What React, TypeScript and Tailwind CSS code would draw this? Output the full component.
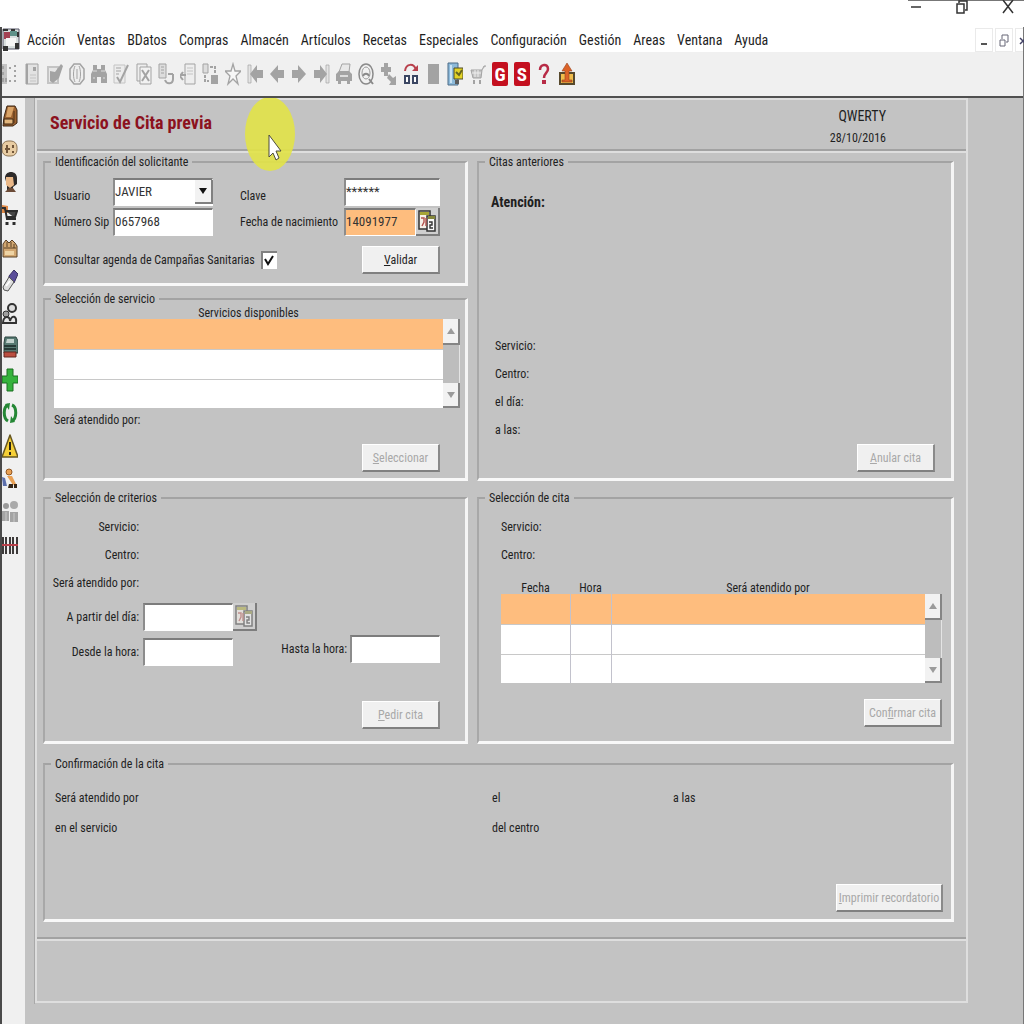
import React, { ReactNode } from "react";

const MENU = [
  "Acción", "Ventas", "BDatos", "Compras", "Almacén", "Artículos", "Recetas",
  "Especiales", "Configuración", "Gestión", "Areas", "Ventana", "Ayuda",
];

const G = "#a3a3a3";
const L = "#c4c4c4";

const TOOLS: { name: string; art: ReactNode }[] = [
  { name: "Lista", art: <><path d="M0 2h5v20H0z" fill={L} /><path d="M1 4v3M1 10v3M1 16v4M4 16v4" stroke={G} strokeWidth="2" /><path d="M8 5v2M8 18v2M13 3v2M13 8v2M13 13v2M13 18v2" stroke={G} strokeWidth="2" /></> },
  { name: "Ficha", art: <><path d="M2 2h12v20H2z" fill="#e2e2e2" stroke={G} /><path d="M3 2v20" stroke={G} strokeWidth="2" /><path d="M6 13h6M6 16h6M6 19h6" stroke={L} /><path d="M9 5h3v4H9z" fill={G} /></> },
  { name: "Modificar", art: <><path d="M1 5h10v16H1z" fill="#e6e6e6" stroke={L} strokeWidth="2" /><path d="M3 9l5 1 6-8 2 2-4 12-6 5-3-2z" fill={G} /></> },
  { name: "Anular", art: <><path d="M5 2h6l4 5v10l-4 5H5l-4-5V7z" fill="#eee" stroke={G} strokeWidth="1.5" /><path d="M6 4c-2 4-2 12 0 16M10 4c2 4 2 12 0 16M8 7v10" fill="none" stroke={G} /></> },
  { name: "Buscar", art: <><path d="M2 3h4v4h4V3h4v5l2 4v9h-6v-6H6v6H0v-9l2-4z" fill={G} /><path d="M2 9h4M10 9h4M2 16h2M12 16h2" stroke="#ddd" /></> },
  { name: "Validar datos", art: <><path d="M1 3h11v18H1z" fill="#ececec" stroke={L} /><path d="M3 6h5M3 9h5M3 12h3" stroke={G} /><path d="M4 15l3 5L15 3" fill="none" stroke={G} strokeWidth="2" /></> },
  { name: "Borrar", art: <><path d="M1 2h10v17H1z" fill="#eee" stroke={G} /><path d="M4 5h11v17H4z" fill="#f2f2f2" stroke={G} /><path d="M6 8l7 11M13 8L6 19" stroke={G} strokeWidth="2" /></> },
  { name: "Duplicar", art: <><path d="M1 2h7v14H1z" fill="#ddd" stroke={G} /><path d="M3 5h3M3 8h3M3 11h3" stroke={G} /><path d="M7 18c2 5 8 4 8-1v-5M10 12h5" fill="none" stroke={G} strokeWidth="2" /></> },
  { name: "Copiar página", art: <><path d="M5 2h10v20H5z" fill="#eee" stroke={G} /><path d="M7 6h6M7 9h6M7 12h6" stroke={L} /><path d="M6 13H0M3 10l-3 4 3 4" fill="none" stroke={G} strokeWidth="2" /></> },
  { name: "Mover", art: <><path d="M1 2h5v9H1z" fill="#ddd" stroke={G} /><path d="M9 13h7v9H9z" fill={G} /><path d="M8 5h5v6M3 13v6h4" fill="none" stroke={G} strokeWidth="2" strokeDasharray="3 1" /></> },
  { name: "Favoritos", art: <path d="M8 2l2 7h6l-5 5 2 8-5-5-5 5 2-8-5-5h6z" fill="#f6f6f6" stroke={G} strokeWidth="1.3" /> },
  { name: "Primero", art: <><path d="M1 3h3v18H1z" fill="#e4e4e4" stroke={G} strokeWidth=".7" /><path d="M3 12l7-9v5h6v8h-6v5z" fill={G} /></> },
  { name: "Anterior", art: <path d="M1 12l8-9v5h6v8H9v5z" fill={G} /> },
  { name: "Siguiente", art: <path d="M15 12L7 3v5H1v8h6v5z" fill={G} /> },
  { name: "Último", art: <><path d="M12 3h3v18h-3z" fill="#e4e4e4" stroke={G} strokeWidth=".7" /><path d="M13 12L6 3v5H0v8h6v5z" fill={G} /></> },
  { name: "Imprimir", art: <><path d="M3 10L6 2h8l-1 8z" fill="#e8e8e8" stroke={G} /><path d="M0 12l3-3h10l3 3v7h-2v3h-3v-3H5v3H2v-3H0z" fill={G} /><path d="M4 14h8" stroke="#ddd" strokeWidth="2" /></> },
  { name: "Consultar", art: <><ellipse cx="8" cy="12" rx="7" ry="10" fill="#f1f1f1" stroke="#8a8a8a" strokeWidth="1.5" /><ellipse cx="8" cy="11" rx="4" ry="6" fill="none" stroke="#999" /><path d="M5 14c1-3 5-3 6 0M11 17l4 5" fill="none" stroke="#8a8a8a" strokeWidth="2" /></> },
  { name: "Añadir", art: <><path d="M3 1h4v4h3v5H7v4H3v-4H0V5h3z" fill={G} /><path d="M8 12l4 4 3-2v9H8l2-3-4-4z" fill={G} /></> },
  { name: "Rehacer", art: <><path d="M2 9c1-8 9-8 11-1" fill="none" stroke="#b8404c" strokeWidth="2" /><path d="M9 9h6V3z" fill="#b8404c" /><path d="M2 14h4v7H2zM10 14h4v7h-4z" fill="#fff" stroke="#3b4763" strokeWidth="2" /></> },
  { name: "Detener", art: <path d="M3 2h11v20H3z" fill={G} /> },
  { name: "Agenda", art: <><path d="M1 1h10v22H1z" fill="#8cb9d9" stroke="#4c6c88" /><path d="M3 3h2v18H3z" fill="#c9e2f2" /><path d="M7 6h9v11H7z" fill="#e3d325" stroke="#4d4a2b" /><path d="M9 10l3 3 3-5" fill="none" stroke="#67651d" strokeWidth="2" /><path d="M8 18h4v4H8z" fill="#5b5b5b" /></> },
  { name: "Carrito", art: <><path d="M1 8h11l-1 8H3zM12 8l2-4h2" fill={L} stroke={G} /><path d="M2 11h9M5 8v7M8 8v7" stroke="#eee" /><path d="M4 18v4M10 18v4" stroke={G} strokeWidth="2" /></> },
  { name: "Gestión G", art: <><rect x="0" y="0" width="16" height="24" rx="2" fill="#c4101f" /><text x="8" y="19" textAnchor="middle" fill="#fff" fontSize="19" fontWeight="bold" fontFamily="Roboto Condensed, Liberation Sans, sans-serif">G</text></> },
  { name: "Servicio S", art: <><rect x="0" y="0" width="16" height="24" rx="2" fill="#c4101f" /><text x="8" y="19" textAnchor="middle" fill="#fff" fontSize="19" fontWeight="bold" fontFamily="Roboto Condensed, Liberation Sans, sans-serif">S</text></> },
  { name: "Ayuda", art: <><path d="M4 8c0-6 8-7 8-1 0 4-4 4-4 9" fill="none" stroke="#b72b46" strokeWidth="2.5" /><path d="M6 18h4v4H6z" fill="#b72b46" /></> },
  { name: "Salir", art: <><path d="M1 11h14v11H1z" fill="#f0bd4c" stroke="#57492d" strokeWidth="2" /><path d="M8 1l5 8h-3v9h3v2H3v-2h3V9H3z" fill="#dc6328" stroke="#95401c" strokeWidth=".6" /></> },
];

const SIDE: { name: string; art: ReactNode }[] = [
  { name: "Caja registradora", art: <><path d="M2 13L5 2h8l2 4v13l-4 3H1z" fill="#9c6231" stroke="#3d2715" /><path d="M6 3h6L9 13H4z" fill="#d9a468" /><path d="M2 15h9v5H2z" fill="#e3b77e" stroke="#3d2715" /><path d="M12 7v12" stroke="#4f3219" /></> },
  { name: "Tarjeta", art: <><rect x="0" y="4" width="15" height="15" rx="6" fill="#e8cca2" stroke="#8d7555" /><path d="M5 8v8M3 12h5M11 8v3M11 14v2" fill="none" stroke="#71563a" strokeWidth="2" /></> },
  { name: "Paciente", art: <><path d="M3 8c0-8 12-8 12 0v6l-4 3v4H5v-6z" fill="#2d2a2a" /><path d="M4 7h7l1 8-4 3-4-3z" fill="#eab888" /><path d="M3 22l4-4h4l3 4z" fill="#6b4a36" /></> },
  { name: "Ventas", art: <><path d="M0 2l6 1v7H0z" fill="#e08a48" /><path d="M0 5h3l2 11h9M4 8h11l-2 6H5" fill="#454545" stroke="#2c2c2c" strokeWidth="2" /><path d="M5 19v3M12 19v3" stroke="#2c2c2c" strokeWidth="3" /></> },
  { name: "Almacén", art: <><path d="M1 8l3-4 3 3 3-3 3 3 2 3v11H1z" fill="#d2a771" stroke="#594026" /><path d="M2 12h12M5 6v5M9 6v5M12 8v4" stroke="#594026" /><path d="M3 15h9v4H3z" fill="#eed4a5" /></> },
  { name: "Medicamentos", art: <><path d="M7 7l5-6 4 4-4 9-5-3z" fill="#5a4d99" stroke="#38305f" /><path d="M1 18l6-10 5 5-6 9-4-1z" fill="#dedede" stroke="#565656" /><path d="M4 17l4-5" stroke="#fff" strokeWidth="2" /></> },
  { name: "Personal", art: <><circle cx="10" cy="6" r="4" fill="#dedede" stroke="#333" strokeWidth="2" /><circle cx="4" cy="12" r="3" fill="#a0a0a0" stroke="#333" /><path d="M1 21c0-7 7-8 7-2 2-7 7-5 6 2z" fill="#e8e8e8" stroke="#333" strokeWidth="2" /></> },
  { name: "Impresora", art: <><path d="M3 2h11l2 4v12H2V8z" fill="#577a72" stroke="#2d4540" /><path d="M5 4h7v4H4z" fill="#c2d2cd" /><path d="M2 11h12M2 14h12" stroke="#273b37" strokeWidth="2" /><path d="M2 17h12v5H2z" fill="#bb4e40" stroke="#60261f" /></> },
  { name: "Añadir", art: <path d="M5 1h6v7h5v7h-5v8H5v-8H0V8h5z" fill="#35b23c" stroke="#1b6e21" /> },
  { name: "Actualizar", art: <><path d="M6 4c-5 2-5 13 0 16M10 4c5 2 5 13 0 16" fill="none" stroke="#258735" strokeWidth="3" /><path d="M3 3l5-1-1 7zM13 21l-5 1 1-7z" fill="#258735" /></> },
  { name: "Aviso", art: <><path d="M8 1l8 22H0z" fill="#f6cf36" stroke="#665721" strokeWidth="1.5" strokeLinejoin="round" /><path d="M8 8v8M8 18v3" stroke="#2a2516" strokeWidth="2" /></> },
  { name: "Consulta", art: <><circle cx="7" cy="5" r="3" fill="#e9a054" stroke="#915722" /><path d="M5 9h5l4 8-3 1-4-6z" fill="#e9a054" /><path d="M0 10l3 1 2 8H1z" fill="#5c6fac" /><path d="M7 17h4v4H6zM12 17h3v4h-3z" fill="#352515" /></> },
  { name: "Grupos", art: <><circle cx="4" cy="6" r="3" fill="#999" /><circle cx="12" cy="5" r="4" fill="#aaa" /><path d="M0 11h7v10H0zM8 12h8v10H8z" fill="#a4a4a4" /><path d="M4 12v9M12 13v9" stroke="#c8c8c8" /></> },
  { name: "Código de barras", art: <><path d="M1 4v17M4 4v17M8 4v17M11 4v17M15 4v17" stroke="#3d3a3a" strokeWidth="2" /><path d="M0 12h16" stroke="#b8404a" strokeWidth="2" /></> },
];

function IconButton({ name, children }: { name: string; children: ReactNode }) {
  return (
    <button type="button" aria-label={name} className="block h-6 w-4 shrink-0">
      <svg viewBox="0 0 16 24" className="block h-6 w-4" aria-hidden="true">{children}</svg>
    </button>
  );
}

function Group({ title, className, children }: { title: string; className?: string; children: ReactNode }) {
  return (
    <fieldset className={`flex min-w-0 flex-col border-t-2 border-r-3 border-b-3 border-l-2 border-t-[#a3a3a3] border-r-[#f5f5f5] border-b-[#f8f8f8] border-l-[#a8a8a8] ${className ?? ""}`}>
      <legend className="ml-1.5 px-1 leading-4">{title}</legend>
      {children}
    </fieldset>
  );
}

function PushButton({ children, disabled, className }: { children: ReactNode; disabled?: boolean; className?: string }) {
  return (
    <button
      type="button"
      disabled={disabled}
      className={`h-7 shrink-0 border-t border-r-2 border-b-2 border-l border-t-white border-r-[#8a8a8a] border-b-[#808080] border-l-white bg-[#f0f0f0] text-center whitespace-nowrap disabled:text-[#a8a8a8] ${className ?? "w-[78px]"}`}
    >
      {children}
    </button>
  );
}

const FIELD = "h-7 min-w-0 border-t-2 border-l-2 border-r border-b border-t-[#7c7c7c] border-l-[#8c8c8c] border-r-white border-b-white bg-white pb-0.5 text-[13px] leading-5 text-[#333] outline-none";

function Calendar({ faded }: { faded?: boolean }) {
  return (
    <button type="button" aria-label="Abrir calendario" className="flex h-7 w-6 shrink-0 items-center justify-center border-r-2 border-b-2 border-[#7d7d7d] bg-[#cfcfcf]">
      <svg viewBox="0 0 18 24" className={faded ? "h-6 w-[18px] opacity-50" : "h-6 w-[18px]"} aria-hidden="true">
        <path d="M1 2h11v18H1z" fill="#f6f0e8" stroke="#333" strokeWidth="1.5" />
        <path d="M2 3h9v3H2z" fill="#a6a436" />
        <path d="M9 7h8v15H9z" fill="#f8f8f8" stroke="#333" strokeWidth="1.5" />
        <path d="M10 7h7v3h-7z" fill="#85873b" />
        <path d="M3 9h3v4l-2 4M8 9v8" fill="none" stroke="#b2524e" strokeWidth="1.4" />
        <path d="M11 13h3v3h-2v3h3" fill="none" stroke="#333" strokeWidth="1.4" />
      </svg>
    </button>
  );
}

function Scroller() {
  return (
    <div className="flex w-[17px] shrink-0 flex-col self-end bg-[#bdbdbd]">
      <button type="button" aria-label="Subir" className="flex h-[26px] items-center justify-center border-r-2 border-b-2 border-[#858585] bg-[#f2f2f2]">
        <svg viewBox="0 0 8 6" className="h-1.5 w-2" aria-hidden="true"><path d="M4 0l4 6H0z" fill="#9b9b9b" /></svg>
      </button>
      <div className="h-[38px] border-r border-[#e4e4e4]" />
      <button type="button" aria-label="Bajar" className="flex h-[25px] items-center justify-center border-r-2 border-b-2 border-[#858585] bg-[#f2f2f2]">
        <svg viewBox="0 0 8 6" className="h-1.5 w-2" aria-hidden="true"><path d="M4 6L0 0h8z" fill="#9b9b9b" /></svg>
      </button>
    </div>
  );
}

function DataTable({ columns }: { columns: { title: string; width: string }[] }) {
  return (
    <div className="flex">
      <table className="flex-1 table-fixed border-collapse">
        <thead>
          <tr className="h-3">
            {columns.map((c) => (
              <th key={c.title} scope="col" className={`p-0 leading-3 font-normal ${c.width}`}>{c.title}</th>
            ))}
          </tr>
        </thead>
        <tbody>
          {["bg-[#febd7e]", "bg-white", "bg-white"].map((bg, i) => (
            <tr key={i} className={`${bg} ${i < 2 ? "h-[30px] border-b border-[#c8c8c8]" : "h-[29px]"}`}>
              {columns.map((c, j) => (
                <td key={c.title} className={j > 0 ? "border-l border-[#c2c2cc]" : ""} />
              ))}
            </tr>
          ))}
        </tbody>
      </table>
      <Scroller />
    </div>
  );
}

function Divider() {
  return <div className="h-1 border-t-2 border-b-2 border-t-[#a2a2a2] border-b-[#dedede]" />;
}

export default function App() {
  return (
    <div className="flex min-h-screen flex-col overflow-hidden bg-[#c3c3c3] font-['Roboto_Condensed','Liberation_Sans_Narrow','Liberation_Sans',sans-serif] text-[12px] leading-4 text-[#1f1f1f]">
      <div className="flex h-[27px] justify-end bg-white">
        <div className="flex h-3 w-[116px] items-center justify-between border-t border-[#777] pr-2.5 pl-0.5">
          <button type="button" aria-label="Minimizar" className="h-3 w-3">
            <svg viewBox="0 0 12 12" className="h-3 w-3"><path d="M1 6h10" stroke="#333" strokeWidth="1.5" /></svg>
          </button>
          <button type="button" aria-label="Restaurar" className="h-3.5 w-3">
            <svg viewBox="0 0 12 14" className="h-3.5 w-3"><path d="M1 4h7v9H1zM3 3V1h8v9H9" fill="none" stroke="#333" strokeWidth="1.5" /></svg>
          </button>
          <button type="button" aria-label="Cerrar" className="h-3.5 w-3">
            <svg viewBox="0 0 12 14" className="h-3.5 w-3"><path d="M1 0l10 13M11 0L1 13" stroke="#333" strokeWidth="1.5" /></svg>
          </button>
        </div>
      </div>

      <div className="flex flex-1 flex-col border-r border-l-2 border-r-[#777] border-l-[#4a4a4a]">
        <div className="flex h-[25px] items-center bg-white text-[14px] leading-5">
          <svg viewBox="0 0 18 24" className="h-6 w-[18px]" aria-hidden="true">
            <path d="M1 1h16v20H1z" fill="#d8dede" stroke="#556" />
            <path d="M1 1h5v2H1zM9 1h4v2H9zM15 4h2v5h-2z" fill="#333" />
            <path d="M2 4h6v7H2z" fill="#a34152" />
            <path d="M8 3h7v5H8z" fill="#5e9189" />
            <path d="M4 10h10v8H4z" fill="#f5f5f5" />
            <path d="M1 18h5v5H1zM13 15h4v6h-4z" fill="#333" />
          </svg>
          <nav className="ml-[7px] flex flex-1 gap-3">
            {MENU.map((m) => <button key={m} type="button">{m}</button>)}
          </nav>
          <div className="flex gap-0.5 text-[#666]">
            <button type="button" aria-label="Minimizar formulario" className="h-6 w-[18px] border border-[#eaeaea]">
              <svg viewBox="0 0 16 22" className="h-[22px] w-4"><path d="M5 15h6" stroke="#555" strokeWidth="2" /></svg>
            </button>
            <button type="button" aria-label="Restaurar formulario" className="h-6 w-[18px] border border-[#eaeaea]">
              <svg viewBox="0 0 16 22" className="h-[22px] w-4"><path d="M4 11h5v6H4zM6 10V6h6v7h-2" fill="none" stroke="#667" /></svg>
            </button>
            <button type="button" aria-label="Cerrar formulario" className="h-6 w-2 border border-r-0 border-[#eaeaea]">
              <svg viewBox="0 0 8 22" className="h-[22px] w-2"><path d="M4 9l6 6M10 9l-6 6" stroke="#446" strokeWidth="1.5" /></svg>
            </button>
          </div>
        </div>

        <div className="flex h-[46px] items-center border-b-2 border-[#505050] bg-[#f0f0f0]">
          <div className="flex w-[573px] justify-between">
            {TOOLS.map((t) => <IconButton key={t.name} name={t.name}>{t.art}</IconButton>)}
          </div>
        </div>

        <div className="flex flex-1">
          <aside className="flex w-[23px] shrink-0 flex-col gap-[9px] bg-[#f0f0f0] pt-1.5">
            {SIDE.map((t) => <IconButton key={t.name} name={t.name}>{t.art}</IconButton>)}
          </aside>

          <main className="relative mr-[55px] mb-5 ml-[9px] flex-1 border-l border-[#a8a8a8]">
            <div className="border-2 border-[#dedede]">
              <header className="flex h-[49px] items-start justify-between overflow-hidden pt-1.5 pr-20 pl-[13px]">
                <h1 className="pt-[7px] text-[18px] leading-5 font-bold text-[#8c121e]">Servicio de Cita previa</h1>
                <div className="text-right">
                  <p className="text-[14px] leading-5">QWERTY</p>
                  <p className="leading-6">28/10/2016</p>
                </div>
              </header>
              <Divider />

              <form className="pt-px pr-3 pb-[15px] pl-1.5" onSubmit={(e) => e.preventDefault()}>
                <div className="grid grid-cols-[minmax(0,425fr)_minmax(0,477fr)] gap-[9px]">
                  <div className="flex flex-col gap-[5px]">
                    <Group title="Identificación del solicitante" className="pb-[9px]">
                      <div className="flex flex-col gap-0.5 pt-2 pr-[25px] pl-[9px]">
                        <div className="flex items-center">
                          <label htmlFor="usuario" className="w-[59px] pt-2">Usuario</label>
                          <div className="relative w-[100px]">
                            <select id="usuario" defaultValue="JAVIER" className={`${FIELD} w-full appearance-none`}>
                              <option>JAVIER</option>
                            </select>
                            <span className="pointer-events-none absolute top-0.5 right-0 flex h-6 w-[18px] items-center justify-center border-r-2 border-b-2 border-[#808080] bg-[#f2f2f2]">
                              <svg viewBox="0 0 8 6" className="h-1.5 w-2"><path d="M0 0h8L4 6z" fill="#111" /></svg>
                            </span>
                          </div>
                          <label htmlFor="clave" className="ml-[27px] w-[104px] pt-2">Clave</label>
                          <input id="clave" type="text" defaultValue="******" className={`${FIELD} flex-1`} />
                        </div>
                        <div className="flex items-center">
                          <label htmlFor="sip" className="w-[59px] whitespace-nowrap">Número Sip</label>
                          <input id="sip" defaultValue="0657968" className={`${FIELD} w-[100px]`} />
                          <label htmlFor="nacimiento" className="ml-[27px] w-[104px] whitespace-nowrap">Fecha de nacimiento</label>
                          <input id="nacimiento" defaultValue="14091977" className={`${FIELD} flex-1 bg-[#febd7e]!`} />
                          <Calendar />
                        </div>
                        <div className="mt-2 flex items-center">
                          <label htmlFor="agenda" className="w-[207px] whitespace-nowrap">Consultar agenda de Campañas Sanitarias</label>
                          <span className="relative h-[18px] w-4">
                            <input id="agenda" type="checkbox" defaultChecked className="block h-[18px] w-4 appearance-none border-t-2 border-l-2 border-[#808080] bg-white" />
                            <svg viewBox="0 0 16 18" className="pointer-events-none absolute inset-0" aria-hidden="true"><path d="M4 8l3 5 5-8" fill="none" stroke="#111" strokeWidth="2" /></svg>
                          </span>
                          <div className="flex flex-1 justify-end"><PushButton><u>V</u>alidar</PushButton></div>
                        </div>
                      </div>
                    </Group>

                    <Group title="Selección de servicio" className="pb-1.5">
                      <div className="flex flex-col pr-[5px] pl-[9px]">
                        <DataTable columns={[{ title: "Servicios disponibles", width: "w-full" }]} />
                        <p className="mt-1">Será atendido por:</p>
                        <div className="mt-4 mr-5 flex justify-end"><PushButton disabled><u>S</u>eleccionar</PushButton></div>
                      </div>
                    </Group>
                  </div>

                  <Group title="Citas anteriores" className="pb-1.5">
                    <div className="flex flex-col pt-6 pr-4 pl-4">
                      <p className="-ml-1 text-[14px] font-bold">Atención:</p>
                      <p className="mt-32">Servicio:</p>
                      <p className="mt-3">Centro:</p>
                      <p className="mt-3">el día:</p>
                      <p className="mt-3">a las:</p>
                      <div className="mt-1.5 flex justify-end"><PushButton disabled><u>A</u>nular cita</PushButton></div>
                    </div>
                  </Group>

                  <Group title="Selección de criterios" className="pb-3">
                    <div className="flex flex-col pt-[13px] pr-[25px]">
                      <p className="w-[94px] text-right">Servicio:</p>
                      <p className="mt-3 w-[94px] text-right">Centro:</p>
                      <p className="mt-3 w-[94px] text-right whitespace-nowrap">Será atendido por:</p>
                      <div className="mt-3 flex items-center">
                        <label htmlFor="dia" className="mr-1 w-[94px] text-right">A partir del día:</label>
                        <input id="dia" className={`${FIELD} w-[90px]`} />
                        <Calendar faded />
                      </div>
                      <div className="mt-1 flex items-center">
                        <label htmlFor="desde" className="mr-1 w-[94px] text-right">Desde la hora:</label>
                        <input id="desde" className={`${FIELD} w-[90px]`} />
                        <span className="flex flex-1 items-center justify-end pb-1.5">
                          <label htmlFor="hasta" className="mr-[3px]">Hasta la hora:</label>
                          <input id="hasta" className={`${FIELD} w-[90px]`} />
                        </span>
                      </div>
                      <div className="mt-8 flex justify-end"><PushButton disabled><u>P</u>edir cita</PushButton></div>
                    </div>
                  </Group>

                  <Group title="Selección de cita" className="pb-3">
                    <div className="flex flex-col pt-[13px] pr-[9px] pl-[22px]">
                      <p>Servicio:</p>
                      <p className="mt-3">Centro:</p>
                      <div className="mt-[19px]">
                        <DataTable columns={[
                          { title: "Fecha", width: "w-[69px]" },
                          { title: "Hora", width: "w-[41px]" },
                          { title: "Será atendido por", width: "w-auto" },
                        ]} />
                      </div>
                      <div className="mt-4 flex justify-end"><PushButton disabled>Con<u>f</u>irmar cita</PushButton></div>
                    </div>
                  </Group>
                </div>

                <Group title="Confirmación de la cita" className="mt-3 pb-[7px]">
                  <div className="flex flex-col pt-[18px] pr-2 pl-2.5">
                    <div className="grid grid-cols-[437fr_181fr_270fr]">
                      <p>Será atendido por</p>
                      <p>el</p>
                      <p>a las</p>
                    </div>
                    <div className="mt-3.5 grid grid-cols-[437fr_451fr]">
                      <p>en el servicio</p>
                      <p>del centro</p>
                    </div>
                    <div className="mt-12 flex justify-end"><PushButton disabled className="w-[107px]"><u>I</u>mprimir recordatorio</PushButton></div>
                  </div>
                </Group>
              </form>

              <Divider />
              <footer className="h-[60px]" />
            </div>

            <svg viewBox="0 0 50 73" className="pointer-events-none absolute top-0 left-[210px] h-[73px] w-[50px] opacity-90" aria-hidden="true">
              <ellipse cx="25" cy="36" rx="25" ry="37" fill="#e3e448" />
            </svg>
            <svg viewBox="0 0 14 30" className="pointer-events-none absolute top-9 left-[233px] h-[30px] w-3.5" aria-hidden="true">
              <path d="M1 1v22l4-4 3 7 3-2-3-7h5z" fill="#fff" stroke="#4b4b3d" />
            </svg>
          </main>
        </div>
      </div>
    </div>
  );
}
